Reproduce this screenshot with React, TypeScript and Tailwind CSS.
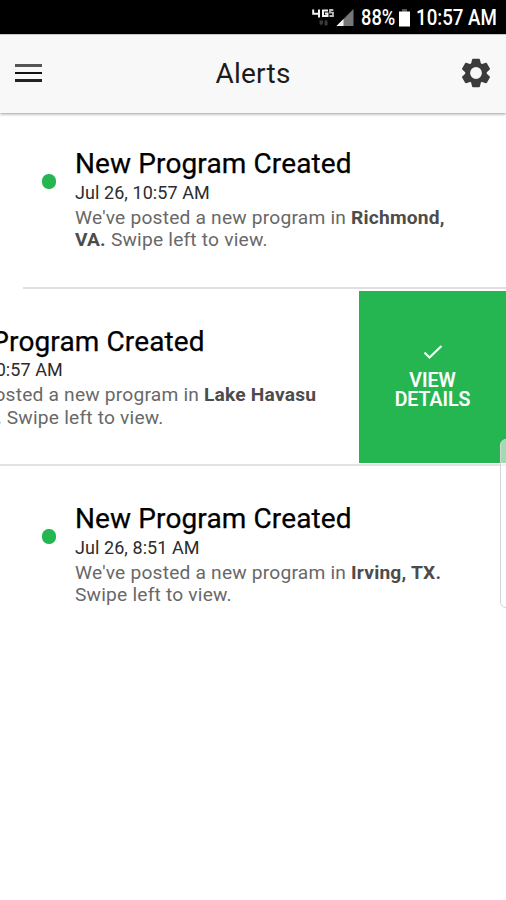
import React from "react";

type Alert = {
  time: string;
  lead: string;
  place: string;
  placeEnd?: string;
  swiped?: boolean;
};

const alerts: Alert[] = [
  { time: "Jul 26, 10:57 AM", lead: "We've posted a new program in ", place: "Richmond,", placeEnd: "VA." },
  { time: "Jul 26, 10:57 AM", lead: "We've posted a new program in ", place: "Lake Havasu", placeEnd: "City, AZ.", swiped: true },
  { time: "Jul 26, 8:51 AM", lead: "We've posted a new program in ", place: "Irving, TX." },
];

function StatusBar() {
  return (
    <div className="flex h-[34px] shrink-0 items-center justify-end bg-black pr-[10px] text-white">
      <svg className="h-[34px] w-[44px]" viewBox="0 0 44 34">
        <g fill="none" stroke="#f2f2f2" strokeWidth="2">
          <path d="M2.200 9.500v4.300h6.600M8 9.500v8" />
          <path d="M17 10.500h-5v5.500h4.500v-2.500h-2.600" />
        </g>
        <path d="M22.300 10h-3.300v2.700h3v3.300h-3.500" fill="none" stroke="#bbb" strokeWidth="1.800" />
        <path d="M8.500 20.500h3.500v3l-1.700 2-1.800-2zM13.500 20.500h3v5h-3z" fill="#3a3a3a" />
        <path d="M42.500 9v17H25.500z" fill="#777" />
        <path d="M32.500 19v7h-7z" fill="#f5f5f5" />
      </svg>
      <span className="ml-[6px] w-[36px] origin-left scale-x-[0.850] whitespace-nowrap pt-[2px] text-[21.500px] font-medium leading-[32px]">88%</span>
      <svg className="ml-[1px] h-[34px] w-[13px]" viewBox="0 0 13 34">
        <path d="M4 9.500h5v2h3v15H1v-15h3z" fill="#fff" />
        <path d="M4 9h5v2.500H4z" fill="#555" />
      </svg>
      <span className="ml-[5px] w-[80px] origin-left scale-x-[0.870] whitespace-nowrap pt-[2px] text-[21.500px] font-medium leading-[32px]">10:57 AM</span>
    </div>
  );
}

const teeth = [0, 60, 120, 180, 240, 300];

function Gear() {
  return (
    <svg className="-mt-[3px] h-[30px] w-[30px] justify-self-end" viewBox="-15 -15 30 30">
      <circle r="8.300" fill="none" stroke="#3b3b3b" strokeWidth="4.800" />
      {teeth.map((angle) => (
        <path key={angle} d="M-5 -9L-3.900 -13.600Q-3.700 -14.300 -3 -14.300H3Q3.700 -14.300 3.900 -13.600L5 -9z" fill="#3b3b3b" transform={`rotate(${angle})`} />
      ))}
    </svg>
  );
}

function Header() {
  return (
    <header className="relative z-10 grid h-[79px] shrink-0 grid-cols-3 items-center border-t border-[#c8c8c8] bg-[#f8f8f8] pl-[15px] pr-[15px] shadow-[0_1px_3px_rgba(0,0,0,0.4)]">
      <div className="-mt-[2px] flex w-[27px] flex-col gap-[5px]">
        <span className="h-[3px] bg-[#555]" />
        <span className="h-[2px] bg-[#111]" />
        <span className="h-[3px] bg-[#222]" />
      </div>
      <h1 className="-mt-[1px] text-center text-[28px] leading-[33px] tracking-[0.250px] text-[#1c1c1c]">Alerts</h1>
      <Gear />
    </header>
  );
}

function AlertText({ alert }: { alert: Alert }) {
  return (
    <div className="w-[506px] shrink-0 pl-[75px] pt-[35px]">
      <div className="relative whitespace-nowrap">
        <span className="absolute left-[-33px] top-[28px] h-[15px] w-[14px] rounded-[6.500px] bg-[#25b651]" />
        <h2 className="text-[28px] leading-[36px] tracking-[0.120px] text-black [-webkit-text-stroke:0.25px_#000]">New Program Created</h2>
        <p className="-mt-[0.500px] text-[18px] leading-[22px] tracking-[0.070px] text-[#2c2c2c]">{alert.time}</p>
        <p className="mt-[3px] text-[19.200px] leading-[22.500px] tracking-[0.200px] text-[#686868]">
          {alert.lead}
          <b className="text-[#4c4c4c]">{alert.place}</b>
          <br />
          {alert.placeEnd && <b className="text-[#4c4c4c]">{alert.placeEnd} </b>}
          Swipe left to view.
        </p>
      </div>
    </div>
  );
}

function AlertRow({ alert, last }: { alert: Alert; last: boolean }) {
  return (
    <section className="flex h-[177.500px] shrink-0 flex-col overflow-hidden">
      {alert.swiped ? (
        <div className="flex flex-1 justify-end">
          <AlertText alert={alert} />
          <div className="mb-[1px] mt-[2px] flex w-[147px] shrink-0 flex-col items-center bg-[#25b651] pt-[51px] text-white">
            <svg className="h-[20px] w-[20px]" viewBox="0 0 20 20" fill="none" stroke="#fff" strokeWidth="2.200">
              <path d="M1.500 10.500l5 5L18.500 4" />
            </svg>
            <p className="mt-[9px] text-center text-[19.500px] font-medium leading-[19.500px] [-webkit-text-stroke:0.2px_#fff]">
              VIEW
              <br />
              DETAILS
            </p>
          </div>
        </div>
      ) : (
        <div className="flex-1">
          <AlertText alert={alert} />
        </div>
      )}
      {!last && <div className={alert.swiped ? "h-[2px] bg-[#e2e2e2]" : "ml-[23px] h-[2px] bg-[#e0e0e0]"} />}
    </section>
  );
}

export default function App() {
  return (
    <main className="relative flex h-[900px] w-[506px] flex-col overflow-hidden bg-white font-['Roboto',sans-serif]">
      <StatusBar />
      <Header />
      <div className="-mt-[2px] flex flex-col">
        {alerts.map((alert, i) => (
          <AlertRow key={i} alert={alert} last={i === alerts.length - 1} />
        ))}
      </div>
      <div className="absolute right-[-6px] top-[439px] h-[169px] w-[12px] rounded-[6px] border border-[#d5d5d5] bg-white/55" />
    </main>
  );
}
